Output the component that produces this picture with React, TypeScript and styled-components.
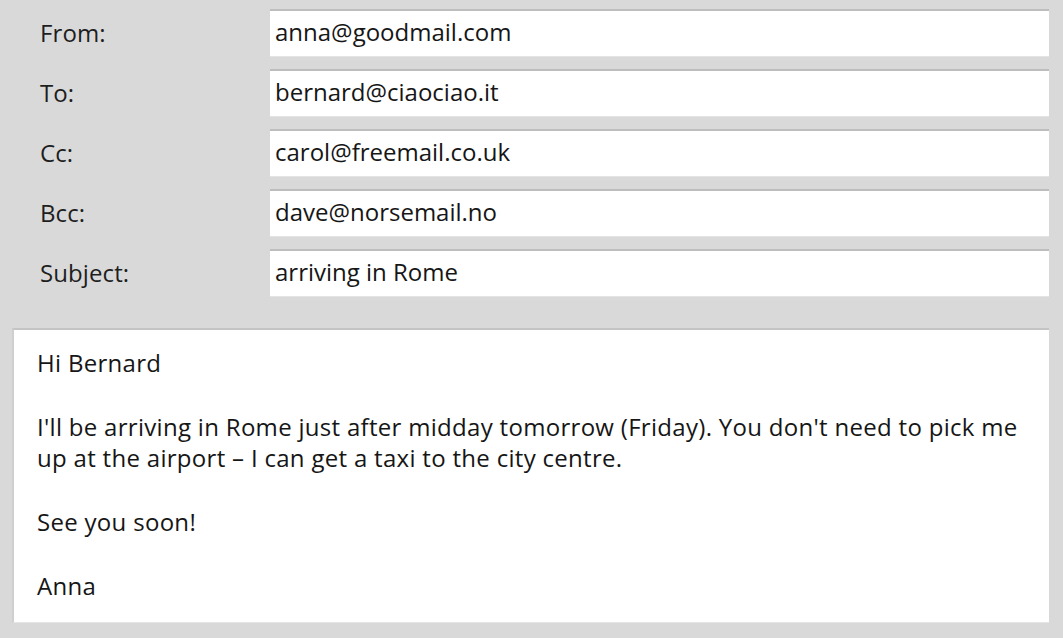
import React from "react";
import styled, { createGlobalStyle } from "styled-components";

const Global = createGlobalStyle`
  html, body { margin: 0; padding: 0; background: #d9d9d9; }
  body { font-family: "Open Sans", "Noto Sans", sans-serif; color: #1c1c1c; }
`;

const Page = styled.div`
  width: 1063px;
  height: 638px;
  box-sizing: border-box;
  background: #d9d9d9;
  padding: 9px 14px 0 12px;
  display: flex;
  flex-direction: column;
  gap: 31px;
  overflow: hidden;
`;

const Header = styled.div`
  display: flex;
  flex-direction: column;
  gap: 12px;
`;

const Row = styled.div`
  display: grid;
  grid-template-columns: 258px 1fr;
  align-items: center;
  height: 48px;
`;

const Label = styled.div`
  padding-left: 28px;
  padding-bottom: 2px;
  font-size: 24px;
  letter-spacing: 0.1px;
  color: #1e1e1e;
`;

const Field = styled.div`
  height: 48px;
  box-sizing: border-box;
  background: #ffffff;
  border-top: 2px solid #bdbdbd;
  border-bottom: 1px solid #e4e4e4;
  display: flex;
  align-items: center;
  padding: 0 5px 4px;
  font-size: 24px;
  color: #161616;
`;

const Body = styled.div`
  flex: none;
  height: 295px;
  background: #ffffff;
  border-top: 2px solid #c4c4c4;
  border-left: 2px solid #cfcfcf;
  border-bottom: 1px solid #e6e6e6;
  box-sizing: border-box;
  padding: 17px 20px 0 23px;
  font-size: 24px;
  line-height: 31px;
  letter-spacing: 0.3px;
  color: #161616;
`;

const Para = styled.p`
  margin: 0 0 33px 0;
`;

const rows: [string, string][] = [
  ["From:", "anna@goodmail.com"],
  ["To:", "bernard@ciaociao.it"],
  ["Cc:", "carol@freemail.co.uk"],
  ["Bcc:", "dave@norsemail.no"],
  ["Subject:", "arriving in Rome"],
];

export default function App() {
  return (
    <>
      <Global />
      <Page>
        <Header>
          {rows.map(([l, v]) => (
            <Row key={l}>
              <Label>{l}</Label>
              <Field>{v}</Field>
            </Row>
          ))}
        </Header>
        <Body>
          <Para>Hi Bernard</Para>
          <Para>
            I'll be arriving in Rome just after midday tomorrow (Friday). You don't need to pick me
            <br />
            up at the airport – I can get a taxi to the city centre.
          </Para>
          <Para>See you soon!</Para>
          <Para>Anna</Para>
        </Body>
      </Page>
    </>
  );
}
